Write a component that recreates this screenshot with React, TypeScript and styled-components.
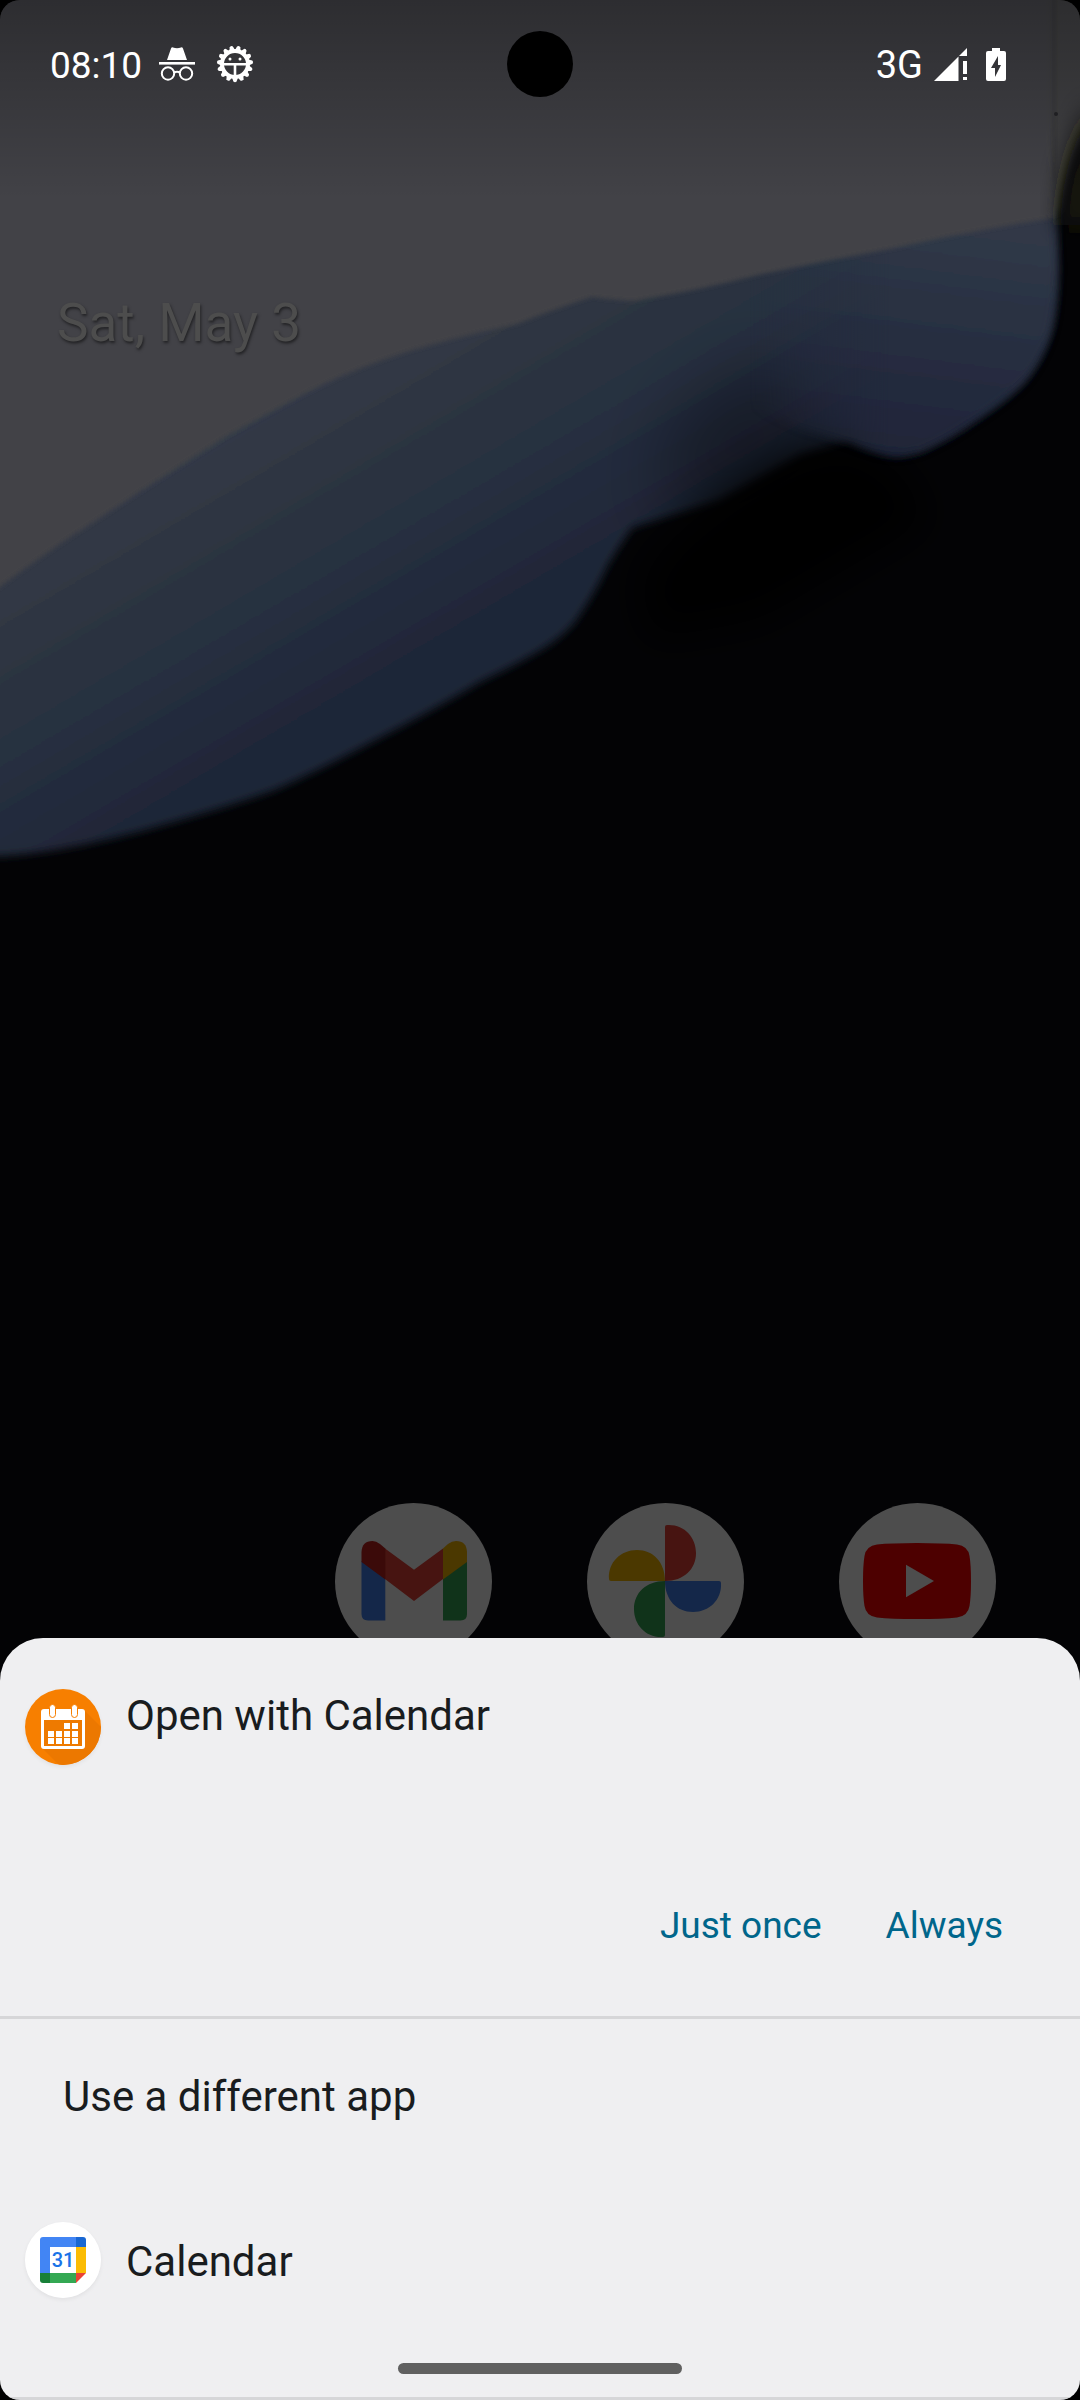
import React from "react";
import styled, { createGlobalStyle } from "styled-components";

const GlobalStyle = createGlobalStyle`
  html, body { margin: 0; background: #000; }
  *, *::before, *::after { box-sizing: border-box; }
  body { font-family: Roboto, "Liberation Sans", sans-serif; }
  button { font: inherit; border: 0; margin: 0; background: none; color: inherit; cursor: pointer; }
`;

const Screen = styled.div`
  position: relative;
  isolation: isolate;
  display: flex;
  flex-direction: column;
  min-height: 100vh;
  overflow: hidden;
  border-radius: 20px;
  background: #030305;
`;

const WallpaperArt = styled.svg`
  position: absolute;
  inset: 0;
  width: 100%;
  height: 100%;
  z-index: -1;
`;

const StatusBar = styled.header`
  position: relative;
  display: flex;
  align-items: center;
  justify-content: space-between;
  height: 128px;
  padding: 0 74px 0 50px;
  color: #fff;
`;

const StatusGroup = styled.div<{ $gap: number }>`
  display: flex;
  align-items: center;
  gap: ${(p) => p.$gap}px;
`;

const Clock = styled.time`
  padding-top: 4px;
  font-size: 37px;
  line-height: 44px;
`;

const Network = styled.span`
  padding-top: 2px;
  font-size: 38px;
  line-height: 44px;
`;

const Camera = styled.span`
  position: absolute;
  top: 31px;
  left: 50%;
  width: 66px;
  height: 66px;
  margin-left: -33px;
  border-radius: 50%;
  background: #000;
`;

const DateLabel = styled.h1`
  margin: 0;
  padding: 164px 57px 0;
  font-size: 53px;
  line-height: 62px;
  font-weight: 400;
  color: #4d4d4d;
  text-shadow: 1px 2px 3px rgba(0, 0, 0, 0.5);
`;

const Dock = styled.nav`
  display: grid;
  grid-template-columns: repeat(4, 1fr);
  justify-items: center;
  margin-top: auto;
  margin-bottom: -22px;
  padding: 0 37px 0 35px;
`;

const DockApp = styled.button<{ $column: number }>`
  grid-column: ${(p) => p.$column};
  grid-row: 1;
  width: 157px;
  height: 157px;
  padding: 0;
  border-radius: 50%;
  background: #4d4d4d;

  svg { display: block; }
`;

const Sheet = styled.section`
  position: relative;
  border-radius: 43px 43px 0 0;
  border-bottom: 3px solid #d6d6d8;
  background: #efeff1;
  color: #191c1e;
`;

const Preferred = styled.div`
  padding-top: 51px;
  padding-bottom: 27px;
  border-bottom: 3px solid #d6d6d8;
`;

const PreferredHeader = styled.div`
  display: flex;
  align-items: flex-start;
  gap: 25px;
  padding: 0 25px;
`;

const Title = styled.h2`
  margin: 0;
  padding-top: 2px;
  font-size: 42px;
  line-height: 50px;
  font-weight: 400;
`;

const Actions = styled.div`
  display: flex;
  justify-content: flex-end;
  margin-top: 98px;
  padding-right: 45px;
`;

const ActionButton = styled.button`
  height: 126px;
  padding: 0 32px;
  font-size: 37px;
  line-height: 44px;
  color: #00668b;
`;

const Subtitle = styled.h3`
  margin: 0;
  padding: 53px 63px 0;
  font-size: 42px;
  line-height: 50px;
  font-weight: 400;
`;

const AppRow = styled.button`
  display: flex;
  align-items: center;
  gap: 25px;
  width: 100%;
  margin-top: 76px;
  padding: 24px 25px;
  text-align: left;
`;

const AppName = styled.span`
  padding-top: 4px;
  font-size: 42px;
  line-height: 50px;
`;

const AppIcon = styled.svg`
  flex: none;
  display: block;
  width: 76px;
  height: 76px;
  border-radius: 50%;
  box-shadow: 0 2px 4px rgba(0, 0, 0, 0.06);
`;

const HomePill = styled.div`
  width: 284px;
  height: 11px;
  margin: 41px auto 0;
  border-radius: 6px;
  background: #606060;
`;

const SheetFoot = styled.div`
  height: 23px;
`;

function Wallpaper() {
  return (
    <WallpaperArt viewBox="0 0 1080 2400" preserveAspectRatio="xMidYMin slice" aria-hidden="true">
      <defs>
        <linearGradient id="blue" gradientUnits="userSpaceOnUse" x1="250" y1="400" x2="405" y2="664">
          <stop offset="0" stopColor="#343b47" />
          <stop offset="0.3" stopColor="#2e3542" />
          <stop offset="0.65" stopColor="#262f3f" />
          <stop offset="1" stopColor="#1f2638" />
        </linearGradient>
        <linearGradient id="lobe" gradientUnits="userSpaceOnUse" x1="960" y1="230" x2="930" y2="460">
          <stop offset="0" stopColor="#303947" />
          <stop offset="0.5" stopColor="#272e41" />
          <stop offset="1" stopColor="#1f2438" />
        </linearGradient>
        <linearGradient id="lobeFade" gradientUnits="userSpaceOnUse" x1="750" y1="0" x2="890" y2="0">
          <stop offset="0" stopColor="#000" />
          <stop offset="1" stopColor="#fff" />
        </linearGradient>
        <linearGradient id="shade" x1="0" y1="0" x2="0" y2="1">
          <stop offset="0" stopColor="#000" stopOpacity="0.32" />
          <stop offset="1" stopColor="#000" stopOpacity="0" />
        </linearGradient>
        <filter id="soft2" x="-10%" y="-10%" width="120%" height="120%"><feGaussianBlur stdDeviation="2" /></filter>
        <filter id="soft4" x="-10%" y="-10%" width="120%" height="120%"><feGaussianBlur stdDeviation="4" /></filter>
        <filter id="soft12" x="-50%" y="-50%" width="200%" height="200%"><feGaussianBlur stdDeviation="12" /></filter>
        <filter id="soft20" x="-50%" y="-50%" width="200%" height="200%"><feGaussianBlur stdDeviation="20" /></filter>
        <filter id="soft40" x="-50%" y="-50%" width="200%" height="200%"><feGaussianBlur stdDeviation="34" /></filter>
        <mask id="lobeMask" maskUnits="userSpaceOnUse" x="600" y="150" width="480" height="400">
          <rect x="600" y="150" width="480" height="400" fill="url(#lobeFade)" />
        </mask>
      </defs>
      <path
        d="M-30 560V856C10 858 60 852 138 832Q225 808 275 790Q320 770 372 742Q430 712 482 681Q520 663 544 648Q562 637 575 622Q594 595 608 565Q620 545 632 528L720 500L800 455L850 440Q875 454 895 456Q910 455 923 450Q955 435 978 418Q1010 397 1026 379Q1048 350 1053 320Q1058 290 1057 260V180H600Z"
        fill="url(#blue)"
        filter="url(#soft4)"
      />
      <path d="M670 430L740 370L800 380L840 440L760 500L660 520Z" fill="#020204" fillOpacity="0.35" filter="url(#soft40)" />
      <path d="M640 575L680 530L732 490L790 456L850 440L900 470L930 520L760 620L650 640Z" fill="#030305" filter="url(#soft20)" />
      <g mask="url(#lobeMask)">
        <path
          d="M740 200V400L800 428L850 443Q875 454 895 456Q910 455 923 450Q955 435 978 418Q1010 397 1026 379Q1048 350 1053 320Q1058 290 1057 260L1052 190Z"
          fill="url(#lobe)"
          filter="url(#soft4)"
        />
      </g>
      <path
        d="M-20 -20V602Q20 571 69 538Q105 515 138 493L227 436L310 391Q360 366 413 350Q465 335 517 324Q560 307 592 297Q615 300 634 301Q700 290 758 275Q830 260 895 248Q980 229 1054 218L1054 -20Z"
        fill="#434346"
        filter="url(#soft2)"
      />
      <path d="M1050 -10H1090V120Q1070 150 1058 210L1052 214Q1050 160 1050 110Z" fill="#424244" filter="url(#soft4)" />
      <path d="M1095 100Q1064 150 1060 225H1100Z" fill="#15120f" filter="url(#soft12)" />
      <circle cx="1056" cy="114" r="2" fill="#242427" />
      <rect width="1080" height="200" fill="url(#shade)" />
    </WallpaperArt>
  );
}

function IncognitoIcon() {
  return (
    <svg width="36" height="36" viewBox="0 0 36 36" aria-hidden="true">
      <path d="M8 14L12 2.5Q12.600 1 14 1.400Q18 3 22 1.400Q23.400 1 24 2.500L28 14Z" fill="#fff" />
      <rect y="16" width="36" height="2.600" fill="#fff" />
      <g fill="none" stroke="#fff" strokeWidth="2">
        <circle cx="9" cy="27.500" r="6.200" />
        <circle cx="27" cy="27.500" r="6.200" />
        <path d="M15 26.500Q18 25 21 26.500" />
      </g>
    </svg>
  );
}

function GearIcon() {
  const teeth = Array.from({ length: 15 }, (_, i) => 180 + (i * 360) / 15);
  return (
    <svg width="38" height="38" viewBox="-19 -19 38 38" aria-hidden="true">
      {teeth.map((angle) => (
        <path key={angle} d="M-3 -13.500L-1.600 -17.500Q0 -19 1.600 -17.500L3 -13.500Z" fill="#fff" transform={`rotate(${angle})`} />
      ))}
      <circle r="13" fill="none" stroke="#fff" strokeWidth="4" />
      <path d="M-12 0.300H12M0 0V12" stroke="#fff" strokeWidth="2.600" />
      <circle cx="-5" cy="-5" r="1.500" fill="#fff" />
      <circle cx="5" cy="-5" r="1.500" fill="#fff" />
    </svg>
  );
}

function SignalIcon() {
  return (
    <svg width="33" height="33" viewBox="0 0 33 33" fill="#fff" aria-hidden="true">
      <path d="M0 33L24.500 8.500V33Z" />
      <path d="M25 8L33 0V8Z" />
      <path d="M29 13h4v13h-4zM29 29h4v3h-4z" />
    </svg>
  );
}

function BatteryIcon() {
  return (
    <svg width="20" height="33" viewBox="0 0 20 33" aria-hidden="true">
      <path
        fill="#fff"
        fillRule="evenodd"
        d="M6 0H14V3H18Q20 3 20 5V31Q20 33 18 33H2Q0 33 0 31V5Q0 3 2 3H6ZM12 8L5 20H9V29L15 17H12Z"
      />
    </svg>
  );
}

function GmailIcon() {
  return (
    <svg width="157" height="157" viewBox="0 0 157 157" aria-hidden="true">
      <path d="M26.500 58L50.300 75V117.500H33Q26.500 117.500 26.500 111Z" fill="#142749" />
      <path d="M132 58L108 75V117.500H125.500Q132 117.500 132 111Z" fill="#10331a" />
      <path d="M50 45.500L79 66.700L108 45.500V76L79 98L50 76Z" fill="#471411" />
      <path d="M26.500 59V49Q27 38 37.500 38Q41 38 45 41L50.300 45.500V76.500Z" fill="#3b0a09" />
      <path d="M132 59V49Q131.500 38 121 38Q117 38 113 41L108 45.500V76.500Z" fill="#4b3800" />
    </svg>
  );
}

function PhotosIcon() {
  const petals: Array<[number, string]> = [
    [0, "#471411"],
    [90, "#142749"],
    [180, "#10331a"],
    [270, "#4b3800"],
  ];
  return (
    <svg width="157" height="157" viewBox="0 0 157 157" aria-hidden="true">
      {petals.map(([angle, fill]) => (
        <path
          key={angle}
          d="M80 22C97 21 109 34 109 50C109 66 97 78 78 78V24Q78 22 80 22Z"
          fill={fill}
          transform={`rotate(${angle} 78 78)`}
        />
      ))}
    </svg>
  );
}

function YouTubeIcon() {
  return (
    <svg width="157" height="157" viewBox="0 0 157 157" aria-hidden="true">
      <path
        d="M78 40Q104 40 118 41.500Q129 43 130.500 53Q132 62 132 78Q132 94 130.500 103Q129 113 118 114.500Q104 116 78 116Q52 116 38 114.500Q27 113 25.500 103Q24 94 24 78Q24 62 25.500 53Q27 43 38 41.500Q52 40 78 40Z"
        fill="#4d0000"
      />
      <path d="M67 61.700L95 78L67 94.300Z" fill="#4d4d4d" />
    </svg>
  );
}

function SimpleCalendarIcon() {
  const cells: Array<[number, number]> = [
    [39, 34], [47, 34],
    [23, 42], [31, 42], [39, 42], [47, 42],
    [23, 49], [31, 49], [39, 49], [47, 49],
  ];
  return (
    <AppIcon viewBox="0 0 76 76" aria-hidden="true">
      <rect width="76" height="76" fill="#f77f00" />
      <path d="M18 60L34 76H76V38L59 21Z" fill="#ec7800" />
      <rect x="16" y="20" width="44" height="40" rx="3" fill="#fff" />
      <rect x="19" y="31" width="38" height="26" fill="#ee7a00" />
      <g fill="#fff" stroke="#f77f00" strokeWidth="1">
        <rect x="24.500" y="15.500" width="6" height="13" rx="3" />
        <rect x="46.500" y="15.500" width="6" height="13" rx="3" />
      </g>
      {cells.map(([x, y]) => (
        <rect key={`${x}-${y}`} x={x} y={y} width="6" height="6" fill="#fff" />
      ))}
    </AppIcon>
  );
}

function GoogleCalendarIcon() {
  return (
    <AppIcon viewBox="0 0 76 76" aria-hidden="true">
      <rect width="76" height="76" fill="#fff" />
      <path d="M18 15H51V25H25V51H15V18Q15 15 18 15Z" fill="#4285f4" />
      <path d="M51 15H58Q61 15 61 18V25H51Z" fill="#1967d2" />
      <rect x="51" y="25" width="10" height="26" fill="#fbbc04" />
      <rect x="25" y="51" width="26" height="10" fill="#34a853" />
      <path d="M15 51H25V61H18Q15 61 15 58Z" fill="#188038" />
      <path d="M51 51H61L51 61Z" fill="#ea4335" />
      <text x="38" y="45" textAnchor="middle" fontFamily="Roboto, sans-serif" fontSize="20" fontWeight="500" fill="#1a73e8">
        31
      </text>
    </AppIcon>
  );
}

export default function App() {
  return (
    <>
      <GlobalStyle />
      <Screen>
        <Wallpaper />
        <StatusBar>
          <StatusGroup $gap={17}>
            <Clock>08:10</Clock>
            <StatusGroup $gap={21}>
              <IncognitoIcon />
              <GearIcon />
            </StatusGroup>
          </StatusGroup>
          <Camera />
          <StatusGroup $gap={19}>
            <StatusGroup $gap={11}>
              <Network>3G</Network>
              <SignalIcon />
            </StatusGroup>
            <BatteryIcon />
          </StatusGroup>
        </StatusBar>

        <DateLabel>Sat, May 3</DateLabel>

        <Dock aria-label="Favorite apps">
          <DockApp $column={2} aria-label="Gmail"><GmailIcon /></DockApp>
          <DockApp $column={3} aria-label="Photos"><PhotosIcon /></DockApp>
          <DockApp $column={4} aria-label="YouTube"><YouTubeIcon /></DockApp>
        </Dock>

        <Sheet>
          <Preferred>
            <PreferredHeader>
              <SimpleCalendarIcon />
              <Title>Open with Calendar</Title>
            </PreferredHeader>
            <Actions>
              <ActionButton>Just once</ActionButton>
              <ActionButton>Always</ActionButton>
            </Actions>
          </Preferred>
          <Subtitle>Use a different app</Subtitle>
          <AppRow>
            <GoogleCalendarIcon />
            <AppName>Calendar</AppName>
          </AppRow>
          <HomePill />
          <SheetFoot />
        </Sheet>
      </Screen>
    </>
  );
}
